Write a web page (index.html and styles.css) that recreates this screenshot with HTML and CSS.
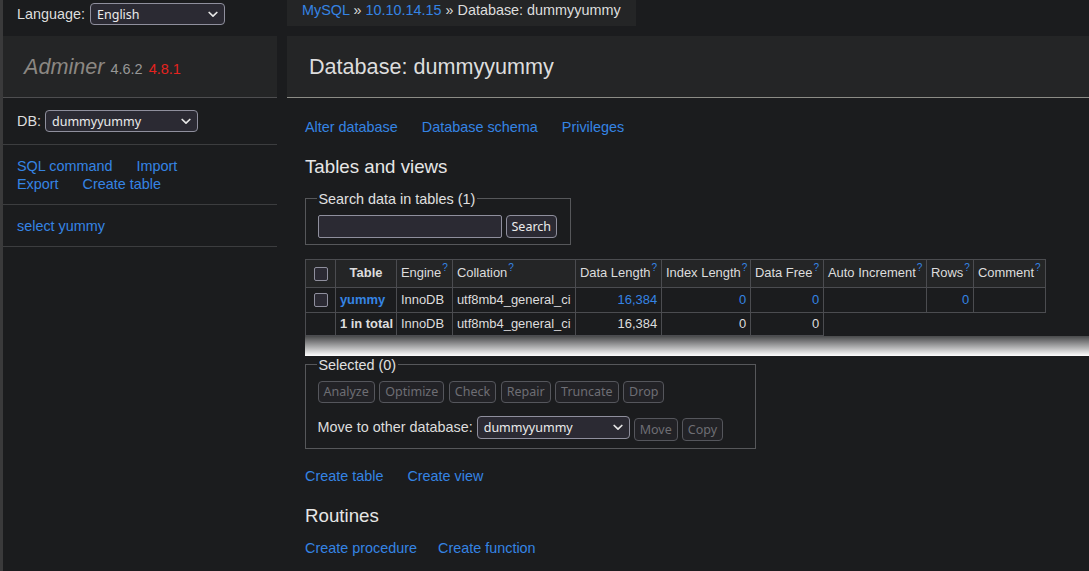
FILE: index.html
```html
<!DOCTYPE html>
<html lang="en">
<head>
<meta charset="utf-8">
<title>Database: dummyyummy - Adminer</title>
<link rel="stylesheet" href="styles.css">
</head>
<body>
<div class="page">
  <div class="lang">
    <span>Language:</span>
    <span class="sel sel-lang">
      <select><option>English</option></select>
      <svg class="chev" width="10" height="7" viewBox="0 0 10 7"><polyline points="1.2,1.5 5,5.2 8.8,1.5" fill="none" stroke="#e6e6e6" stroke-width="1.7" stroke-linecap="round" stroke-linejoin="round"/></svg>
    </span>
  </div>
  <div class="crumb-col">
    <div class="breadcrumb"><a href="#">MySQL</a> » <a href="#">10.10.14.15</a> » Database: dummyyummy</div>
  </div>

  <aside class="menu">
    <h1><a class="logo" href="#">Adminer</a> <span class="version">4.6.2</span> <a class="newver" href="#">4.8.1</a></h1>
    <p class="dbsel">DB:
      <span class="sel sel-db">
        <select><option>dummyyummy</option></select>
        <svg class="chev" width="10" height="7" viewBox="0 0 10 7"><polyline points="1.2,1.5 5,5.2 8.8,1.5" fill="none" stroke="#e6e6e6" stroke-width="1.7" stroke-linecap="round" stroke-linejoin="round"/></svg>
      </span>
    </p>
    <p class="links side-links"><a href="#">SQL command</a> <a href="#">Import</a><br><a href="#">Export</a> <a href="#">Create table</a></p>
    <p class="tables"><a href="#">select yummy</a></p>
  </aside>

  <main class="content">
    <h2>Database: dummyyummy</h2>
    <p class="links"><a href="#">Alter database</a> <a href="#">Database schema</a> <a href="#">Privileges</a></p>
    <h3>Tables and views</h3>
    <fieldset class="search">
      <legend>Search data in tables (1)</legend>
      <input class="text" type="search"> <button class="btn">Search</button>
    </fieldset>

    <table class="tbl">
      <colgroup>
        <col class="c-cb"><col class="c-table"><col class="c-engine"><col class="c-coll">
        <col class="c-dlen"><col class="c-ilen"><col class="c-dfree"><col class="c-auto">
        <col class="c-rows"><col class="c-comment">
      </colgroup>
      <thead>
        <tr>
          <td class="cb"><input type="checkbox" class="chk"></td>
          <th>Table</th>
          <td>Engine<sup>?</sup></td>
          <td>Collation<sup>?</sup></td>
          <td>Data Length<sup>?</sup></td>
          <td>Index Length<sup>?</sup></td>
          <td>Data Free<sup>?</sup></td>
          <td>Auto Increment<sup>?</sup></td>
          <td>Rows<sup>?</sup></td>
          <td>Comment<sup>?</sup></td>
        </tr>
      </thead>
      <tbody>
        <tr class="row">
          <td class="cb"><input type="checkbox" class="chk"></td>
          <th><a href="#">yummy</a></th>
          <td>InnoDB</td>
          <td>utf8mb4_general_ci</td>
          <td class="num"><a href="#">16,384</a></td>
          <td class="num"><a href="#">0</a></td>
          <td class="num"><a href="#">0</a></td>
          <td class="num"></td>
          <td class="num"><a href="#">0</a></td>
          <td></td>
        </tr>
        <tr class="total">
          <td class="cb"></td>
          <th>1 in total</th>
          <td>InnoDB</td>
          <td>utf8mb4_general_ci</td>
          <td class="num">16,384</td>
          <td class="num">0</td>
          <td class="num">0</td>
        </tr>
      </tbody>
    </table>

    <div class="footer">
      <div class="footer-in">
        <fieldset class="selected">
          <legend>Selected (0)</legend>
          <div class="btnrow">
            <button class="btn" disabled>Analyze</button>
            <button class="btn" disabled>Optimize</button>
            <button class="btn" disabled>Check</button>
            <button class="btn" disabled>Repair</button>
            <button class="btn" disabled>Truncate</button>
            <button class="btn" disabled>Drop</button>
          </div>
          <p class="move">Move to other database:
            <span class="sel sel-move">
              <select><option>dummyyummy</option></select>
              <svg class="chev" width="10" height="7" viewBox="0 0 10 7"><polyline points="1.2,1.5 5,5.2 8.8,1.5" fill="none" stroke="#e6e6e6" stroke-width="1.7" stroke-linecap="round" stroke-linejoin="round"/></svg>
            </span>
            <button class="btn mv" disabled>Move</button>
            <button class="btn mv" disabled>Copy</button>
          </p>
        </fieldset>
      </div>
    </div>

    <p class="links"><a href="#">Create table</a> <a href="#">Create view</a></p>
    <h3>Routines</h3>
    <p class="links"><a href="#" class="tight">Create procedure</a> <a href="#">Create function</a></p>
  </main>
</div>
</body>
</html>
```

FILE: styles.css
```css
html, body {
  margin: 0;
  padding: 0;
  background: #1b1c1e;
}
body {
  color: #dddddd;
  font: 14.4px/18px "Liberation Sans", Arial, Helvetica, sans-serif;
  border-left: 3px solid #3a3a3b;
  min-height: 571px;
  box-sizing: border-box;
  overflow: hidden;
}
a {
  color: #3584e4;
  text-decoration: none;
}
.page {
  display: grid;
  grid-template-columns: 274px 1fr;
  grid-template-rows: 36px auto;
  column-gap: 28px;
}

/* top row */
.lang {
  display: flex;
  align-items: center;
  gap: 5px;
  padding: 3px 0 0 14px;
  height: 22px;
}
.crumb-col {
  min-width: 0;
}
.breadcrumb {
  margin-left: -18px;
  width: fit-content;
  white-space: nowrap;
  height: 26px;
  line-height: 20px;
  padding: 0 15px;
  background: #242526;
  color: #dddddd;
}

/* selects */
.sel {
  position: relative;
  display: inline-block;
  vertical-align: middle;
}
.sel select {
  -webkit-appearance: none;
  appearance: none;
  display: block;
  background: #2b2a33;
  color: #ececec;
  border: 1px solid #8f8f9d;
  border-radius: 4px;
  font: 12.5px "Noto Sans", "DejaVu Sans", sans-serif;
  padding: 0 6px;
  height: 22px;
  box-sizing: border-box;
}
.sel .chev {
  position: absolute;
  top: 8px;
  right: 7px;
  pointer-events: none;
}
.sel-lang select { width: 135px; }
.sel-db select { width: 153px; }
.sel-move select { width: 153px; height: 23px; }

/* sidebar */
.menu h1 {
  margin: 0;
  height: 62px;
  box-sizing: border-box;
  font-size: 21.6px;
  line-height: 27px;
  font-weight: normal;
  padding: 17px 20px 0 21px;
  background: #242526;
  border-bottom: 1px solid #4e4e50;
  white-space: nowrap;
}
.logo {
  color: #8b8782;
  font-style: italic;
}
.version {
  font-size: 14.5px;
  line-height: 14px;
  color: #979797;
}
.newver {
  font-size: 14.5px;
  line-height: 14px;
  color: #e5231f;
}
.menu p {
  margin: 0;
  padding: 11.5px 14px;
  border-bottom: 1px solid #3c3d3f;
}
.menu .dbsel {
  display: flex;
  align-items: center;
  gap: 4px;
  padding-top: 12px;
  padding-bottom: 12px;
}
.links a {
  margin-right: 20px;
  white-space: nowrap;
}
.links a.tight {
  margin-right: 17px;
}

/* content */
.content {
  min-width: 0;
  padding-bottom: 20px;
}
.content h2 {
  margin: 0 0 20px -18px;
  height: 62px;
  box-sizing: border-box;
  font-size: 21.6px;
  line-height: 27px;
  font-weight: normal;
  color: #dddddd;
  padding: 17px 22px 0;
  background: #242526;
  border-bottom: 1px solid #8c8c86;
}
.content p {
  margin: 11.5px 0 0;
}
.content h3 {
  font-weight: normal;
  font-size: 18.72px;
  line-height: 23.4px;
  margin: 19px 0 0;
  color: #e6e6e6;
}

fieldset {
  display: inline-block;
  vertical-align: top;
  margin: 11.5px 0 0;
  padding: 7px 11.5px 6px;
  border: 1px solid #56575a;
  min-width: 0;
}
legend {
  padding: 0 2px;
  margin-left: -1px;
  color: #e0e0e0;
}
.search {
  width: 266px;
  box-sizing: border-box;
}
.text {
  -webkit-appearance: none;
  appearance: none;
  width: 184px;
  height: 23px;
  box-sizing: border-box;
  background: #2b2a33;
  border: 1px solid #8f8f9d;
  border-radius: 2px;
  vertical-align: middle;
  color: #eee;
  margin: 0;
}
.btn {
  font: 12.5px "Noto Sans", "DejaVu Sans", sans-serif;
  color: #ececec;
  background: #2b2a33;
  border: 1px solid #8f8f9d;
  border-radius: 4px;
  height: 23px;
  padding: 0 5px;
  margin: 0;
  vertical-align: middle;
  box-sizing: border-box;
}
.btn:disabled {
  color: #6e6e74;
  border-color: #55565c;
  background: #222226;
}

/* table */
.tbl {
  margin: 14px 0 0;
  border-collapse: collapse;
  table-layout: fixed;
  width: 740px;
  font-size: 12.96px;
  line-height: 16.2px;
}
.c-cb { width: 30px; }
.c-table { width: 61px; }
.c-engine { width: 56px; }
.c-coll { width: 123px; }
.c-dlen { width: 86px; }
.c-ilen { width: 89px; }
.c-dfree { width: 73px; }
.c-auto { width: 103px; }
.c-rows { width: 47px; }
.c-comment { width: 72px; }
.tbl td, .tbl th {
  border: 1px solid #4b4c50;
  padding: 2.6px 3.9px;
  text-align: left;
  white-space: nowrap;
  overflow: hidden;
}
.tbl thead td, .tbl thead th {
  background: #242526;
  height: 22px;
}
.tbl thead th {
  text-align: center;
  font-weight: bold;
}
.tbl tbody th {
  font-weight: bold;
}
.tbl tbody th a { color: #3584e4; }
.tbl sup {
  color: #3584e4;
  font-size: 10px;
  line-height: 0;
  vertical-align: 6px;
  margin-left: 1px;
}
.tbl .num {
  text-align: right;
}
.tbl .cb {
  text-align: center;
  padding: 0 4px;
}
.tbl .row td, .tbl .row th { height: 19px; }
.tbl .total td, .tbl .total th { height: 16px; }
.chk {
  -webkit-appearance: none;
  appearance: none;
  display: block;
  margin: 0 auto;
  width: 14px;
  height: 14px;
  box-sizing: border-box;
  border: 1.5px solid #8f8f9d;
  border-radius: 2px;
  background: #2b2a33;
}

/* footer with fade */
.footer {
  border-top: 20px solid rgba(255, 255, 255, .7);
  border-image: linear-gradient(rgba(255, 255, 255, .2), #fff) 100% 0;
}
.footer-in {
  padding: 0 0 7px;
}
.selected {
  margin-top: 0;
  width: 451px;
  box-sizing: border-box;
  padding-top: 7px;
  padding-bottom: 7px;
}
.btnrow {
  display: flex;
  gap: 4.5px;
}
.btnrow .btn {
  height: 22px;
}
.content .move {
  margin: 13px 0 0;
  display: flex;
  align-items: flex-start;
  gap: 4px;
  line-height: 23px;
}
.move .btn.mv {
  margin-top: 2px;
}
```
